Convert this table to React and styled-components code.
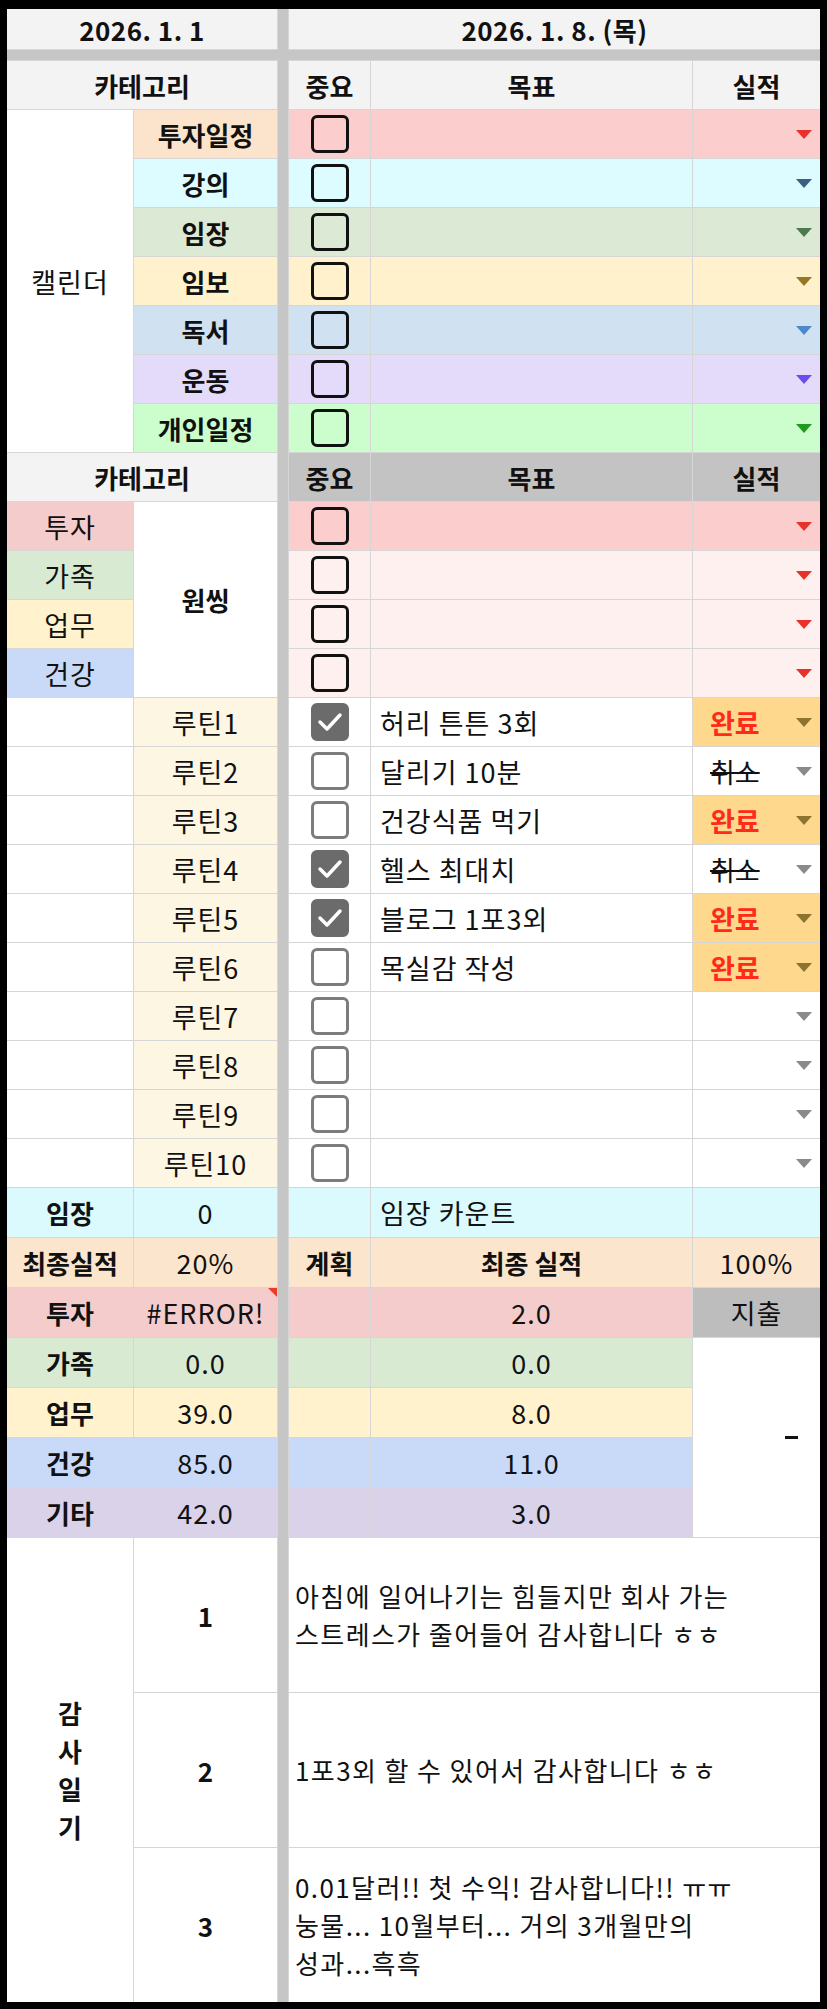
import React from "react";
import styled, { createGlobalStyle } from "styled-components";

const GlobalStyle = createGlobalStyle`
  html, body {
    margin: 0;
    padding: 0;
    background: #000;
  }
  body {
    font-family: "Noto Sans CJK KR", "Noto Sans", sans-serif;
    color: #111;
  }
  * {
    box-sizing: border-box;
  }
`;

const Frame = styled.div`
  width: 827px;
  min-height: 2009px;
  padding: 9px 7px 0 7px;
  background: #000;
`;

const Sheet = styled.div`
  display: grid;
  grid-template-columns: 126px 143px 10px 81px 321px 127px;
  grid-template-rows: 40px 10px repeat(23, 48px) repeat(7, 49px) repeat(3, 154px);
  gap: 1px;
  background: #d6d6d6;
`;

const Cell = styled.div`
  grid-column: ${(p) => p.$c};
  grid-row: ${(p) => p.$r};
  background: ${(p) => p.$bg || "#fff"};
  display: flex;
  align-items: center;
  justify-content: center;
  font-size: ${(p) => (p.$bold ? "26px" : "27px")};
  letter-spacing: ${(p) => (p.$bold ? "0" : "1px")};
  font-weight: ${(p) => (p.$bold ? 700 : 400)};
  white-space: nowrap;
  overflow: hidden;
  position: relative;
`;

const DateCell = styled(Cell)`
  background: #f3f3f3;
  font-weight: 700;
  font-size: 26px;
  letter-spacing: 0.5px;
`;

const HeadCell = styled(Cell)`
  background: ${(p) => (p.$dark ? "#c3c3c3" : "#f3f3f3")};
  font-weight: 700;
  font-size: 26px;
  letter-spacing: 0;
`;

const Divider = styled.div`
  grid-column: 3;
  grid-row: 1 / -1;
  background: #c6c6c6;
`;

const SepBar = styled.div`
  grid-column: 1 / -1;
  grid-row: 2;
  background: #c6c6c6;
`;

const GoalCell = styled(Cell)`
  justify-content: flex-start;
  padding-left: 9px;
`;

const ResultCell = styled(Cell)`
  justify-content: space-between;
  padding: 0 8px 0 17px;
`;

const Status = styled.span`
  font-weight: ${(p) => (p.$done ? 700 : 400)};
  letter-spacing: 0;
  color: ${(p) => (p.$done ? "#ff2a1a" : "#111")};
  text-decoration: ${(p) => (p.$done ? "none" : "line-through")};
  text-decoration-thickness: 2px;
`;

const Arrow = styled.span`
  margin-left: auto;
  width: 0;
  height: 0;
  border-left: 8px solid transparent;
  border-right: 8px solid transparent;
  border-top: 9px solid ${(p) => p.$color};
`;

const Box = styled.span`
  width: 38px;
  height: 38px;
  border-radius: 6px;
  display: flex;
  align-items: center;
  justify-content: center;
  border: ${(p) =>
    p.$variant === "dark"
      ? "3.5px solid #111"
      : p.$variant === "checked"
      ? "3px solid #6b6b6b"
      : "3px solid #7c7c7c"};
  background: ${(p) =>
    p.$variant === "dark" ? "transparent" : p.$variant === "checked" ? "#6b6b6b" : "#fff"};
`;

const ErrorCell = styled(Cell)`
  &::after {
    content: "";
    position: absolute;
    top: 0;
    right: 0;
    border-top: 9px solid #f03a24;
    border-left: 9px solid transparent;
  }
`;

const DashCell = styled(Cell)`
  justify-content: flex-end;
  padding-right: 22px;
`;

const Dash = styled.span`
  width: 13px;
  height: 3px;
  background: #111;
`;

const DiaryTitle = styled(Cell)`
  flex-direction: column;
  font-weight: 700;
  line-height: 38px;
`;

const DiaryText = styled(Cell)`
  justify-content: flex-start;
  padding-left: 6px;
  white-space: normal;
  font-size: 26px;
  letter-spacing: 1.4px;
  line-height: 38px;
`;

const calendar = [
  { label: "투자일정", bg: "#fbcdcd", labelBg: "#fce4cc", arrow: "#e8312a" },
  { label: "강의", bg: "#dcfcff", labelBg: "#dcfcff", arrow: "#3d5f80" },
  { label: "임장", bg: "#dbe9d5", labelBg: "#dbe9d5", arrow: "#4d7a4d" },
  { label: "임보", bg: "#fff1cb", labelBg: "#fff1cb", arrow: "#9a7624" },
  { label: "독서", bg: "#d0e1f2", labelBg: "#d0e1f2", arrow: "#4d88c8" },
  { label: "운동", bg: "#e4dbfa", labelBg: "#e4dbfa", arrow: "#6a4cf0" },
  { label: "개인일정", bg: "#ccfdcc", labelBg: "#ccfdcc", arrow: "#1f9a1f" },
];

const oneThing = [
  { label: "투자", labelBg: "#f4cccc", bg: "#fbcdcd" },
  { label: "가족", labelBg: "#d9ead3", bg: "#fff0f0" },
  { label: "업무", labelBg: "#fff2cc", bg: "#fff0f0" },
  { label: "건강", labelBg: "#c9daf8", bg: "#fff0f0" },
];

const routines = [
  { goal: "허리 튼튼 3회", checked: true, status: "완료" },
  { goal: "달리기 10분", checked: false, status: "취소" },
  { goal: "건강식품 먹기", checked: false, status: "완료" },
  { goal: "헬스 최대치", checked: true, status: "취소" },
  { goal: "블로그 1포3외", checked: true, status: "완료" },
  { goal: "목실감 작성", checked: false, status: "완료" },
  { goal: "", checked: false, status: "" },
  { goal: "", checked: false, status: "" },
  { goal: "", checked: false, status: "" },
  { goal: "", checked: false, status: "" },
];

const totals = [
  { label: "가족", bg: "#d9ead3", left: "0.0", right: "0.0" },
  { label: "업무", bg: "#fff2cc", left: "39.0", right: "8.0" },
  { label: "건강", bg: "#c9daf8", left: "85.0", right: "11.0" },
  { label: "기타", bg: "#d9d2e9", left: "42.0", right: "3.0" },
];

const diary = [
  ["아침에 일어나기는 힘들지만 회사 가는", "스트레스가 줄어들어 감사합니다 ㅎㅎ"],
  ["1포3외 할 수 있어서 감사합니다 ㅎㅎ"],
  ["0.01달러!! 첫 수익! 감사합니다!! ㅠㅠ", "눙물... 10월부터... 거의 3개월만의", "성과...흑흑"],
];

const CheckMark = () => (
  <svg width="26" height="22" viewBox="0 0 26 22">
    <polyline points="3,11 10,18 23,4" fill="none" stroke="#fff" strokeWidth="3.5" strokeLinecap="round" strokeLinejoin="round" />
  </svg>
);

const Headers = ({ r, dark }) => (
  <>
    <HeadCell $c="1 / 3" $r={r}>카테고리</HeadCell>
    <HeadCell $c="4" $r={r} $dark={dark}>중요</HeadCell>
    <HeadCell $c="5" $r={r} $dark={dark}>목표</HeadCell>
    <HeadCell $c="6" $r={r} $dark={dark}>실적</HeadCell>
  </>
);

const App = () => {
  return (
    <Frame>
      <GlobalStyle />
      <Sheet>
        <DateCell $c="1 / 3" $r="1">2026. 1. 1</DateCell>
        <DateCell $c="4 / 7" $r="1">2026. 1. 8. (목)</DateCell>
        <SepBar />
        <Divider />

        <Headers r="3" />
        <Cell $c="1" $r="4 / 11">캘린더</Cell>
        {calendar.map((row, i) => (
          <React.Fragment key={row.label}>
            <Cell $c="2" $r={4 + i} $bg={row.labelBg} $bold>{row.label}</Cell>
            <Cell $c="4" $r={4 + i} $bg={row.bg}>
              <Box $variant="dark" />
            </Cell>
            <GoalCell $c="5" $r={4 + i} $bg={row.bg} />
            <ResultCell $c="6" $r={4 + i} $bg={row.bg}>
              <Arrow $color={row.arrow} />
            </ResultCell>
          </React.Fragment>
        ))}

        <Headers r="11" dark />
        <Cell $c="2" $r="12 / 16" $bold>원씽</Cell>
        {oneThing.map((row, i) => (
          <React.Fragment key={row.label}>
            <Cell $c="1" $r={12 + i} $bg={row.labelBg}>{row.label}</Cell>
            <Cell $c="4" $r={12 + i} $bg={row.bg}>
              <Box $variant="dark" />
            </Cell>
            <GoalCell $c="5" $r={12 + i} $bg={row.bg} />
            <ResultCell $c="6" $r={12 + i} $bg={row.bg}>
              <Arrow $color="#e8312a" />
            </ResultCell>
          </React.Fragment>
        ))}

        {routines.map((row, i) => {
          const done = row.status === "완료";
          return (
            <React.Fragment key={i}>
              <Cell $c="1" $r={16 + i} />
              <Cell $c="2" $r={16 + i} $bg="#fdf6e2">루틴{i + 1}</Cell>
              <Cell $c="4" $r={16 + i}>
                <Box $variant={row.checked ? "checked" : "empty"}>{row.checked && <CheckMark />}</Box>
              </Cell>
              <GoalCell $c="5" $r={16 + i}>{row.goal}</GoalCell>
              <ResultCell $c="6" $r={16 + i} $bg={done ? "#fed88d" : "#fff"}>
                {row.status && <Status $done={done}>{row.status}</Status>}
                <Arrow $color={done ? "#8c7430" : "#8a8a8a"} />
              </ResultCell>
            </React.Fragment>
          );
        })}

        <Cell $c="1" $r="26" $bg="#dafafd" $bold>임장</Cell>
        <Cell $c="2" $r="26" $bg="#dafafd">0</Cell>
        <Cell $c="4" $r="26" $bg="#dafafd" />
        <GoalCell $c="5" $r="26" $bg="#dafafd">임장 카운트</GoalCell>
        <Cell $c="6" $r="26" $bg="#dafafd" />

        <Cell $c="1" $r="27" $bg="#fce5cd" $bold>최종실적</Cell>
        <Cell $c="2" $r="27" $bg="#fce5cd">20%</Cell>
        <Cell $c="4" $r="27" $bg="#fce5cd" $bold>계획</Cell>
        <Cell $c="5" $r="27" $bg="#fce5cd" $bold>최종 실적</Cell>
        <Cell $c="6" $r="27" $bg="#fce5cd">100%</Cell>

        <Cell $c="1" $r="28" $bg="#f4cccc" $bold>투자</Cell>
        <ErrorCell $c="2" $r="28" $bg="#f4cccc">#ERROR!</ErrorCell>
        <Cell $c="4" $r="28" $bg="#f4cccc" />
        <Cell $c="5" $r="28" $bg="#f4cccc">2.0</Cell>
        <Cell $c="6" $r="28" $bg="#bdbdbd">지출</Cell>

        {totals.map((row, i) => (
          <React.Fragment key={row.label}>
            <Cell $c="1" $r={29 + i} $bg={row.bg} $bold>{row.label}</Cell>
            <Cell $c="2" $r={29 + i} $bg={row.bg}>{row.left}</Cell>
            <Cell $c="4" $r={29 + i} $bg={row.bg} />
            <Cell $c="5" $r={29 + i} $bg={row.bg}>{row.right}</Cell>
          </React.Fragment>
        ))}
        <DashCell $c="6" $r="29 / 33">
          <Dash />
        </DashCell>

        <DiaryTitle $c="1" $r="33 / 36" $bold>
          <span>감</span>
          <span>사</span>
          <span>일</span>
          <span>기</span>
        </DiaryTitle>
        {diary.map((lines, i) => (
          <React.Fragment key={i}>
            <Cell $c="2" $r={33 + i} $bold>{i + 1}</Cell>
            <DiaryText $c="4 / 7" $r={33 + i}>
              <div>
                {lines.map((line, j) => (
                  <div key={j}>{line}</div>
                ))}
              </div>
            </DiaryText>
          </React.Fragment>
        ))}
      </Sheet>
    </Frame>
  );
};

export default App;
